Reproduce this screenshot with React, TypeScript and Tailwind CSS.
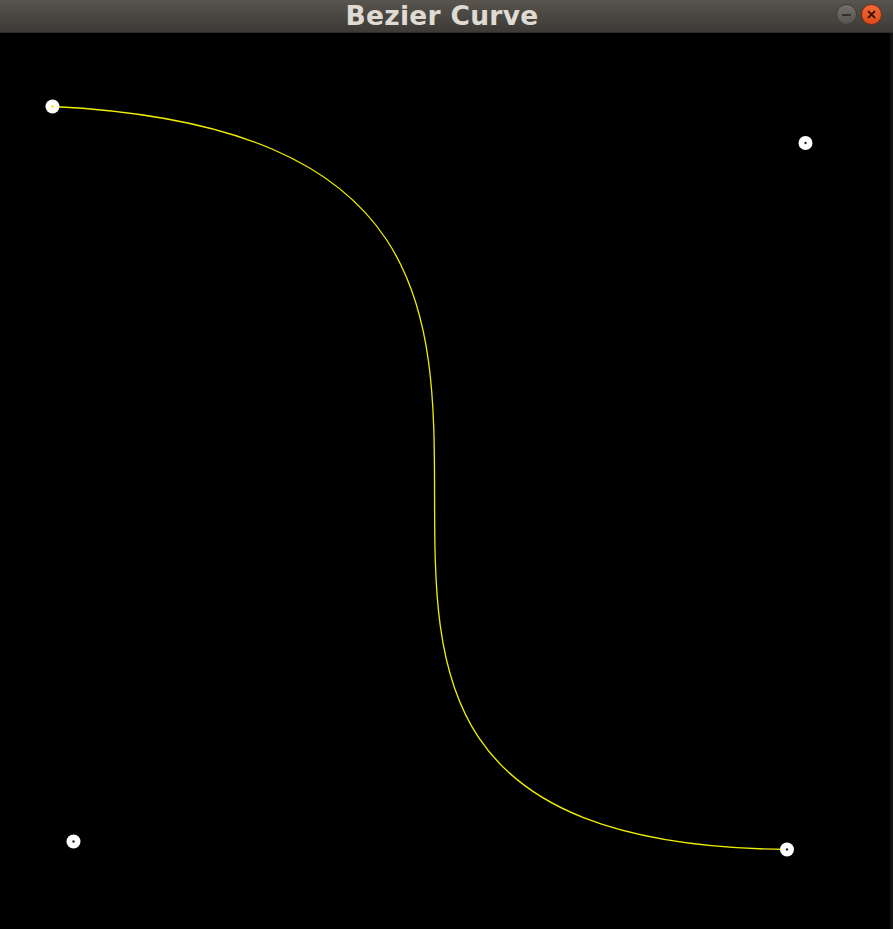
export default function App() {
  // control points in canvas coordinates (canvas starts below the 33px title bar)
  const p0 = { x: 52.5, y: 73.5 }
  const p1 = { x: 805.5, y: 110 }
  const p2 = { x: 73.5, y: 808.5 }
  const p3 = { x: 787, y: 816.5 }

  return (
    <div className="w-[893px] h-[929px] flex flex-col bg-black overflow-hidden">
      <div className="h-[33px] shrink-0 relative flex items-center justify-center pr-[9px] bg-gradient-to-b from-[#58544e] to-[#3d3b37] border-b border-[#2b2a27]">
        <span
          className="text-[26.5px] font-bold leading-none text-[#dfdbd2] tracking-[0.3px]"
          style={{ fontFamily: '"DejaVu Sans", sans-serif' }}
        >
          Bezier Curve
        </span>
        <div className="absolute right-[11px] top-[4px] flex items-center gap-[4px]">
          <div className="w-[21px] h-[21px] rounded-full bg-gradient-to-b from-[#74716b] to-[#55534f] border border-[#3a3935] flex items-center justify-center">
            <div className="w-[9px] h-[2px] bg-[#2f2e2b] rounded" />
          </div>
          <div className="w-[21px] h-[21px] rounded-full bg-gradient-to-b from-[#f36a37] to-[#de4b17] border border-[#7a2a0e] flex items-center justify-center">
            <svg width="9" height="9" viewBox="0 0 9 9">
              <path d="M1.5 1.5 L7.5 7.5 M7.5 1.5 L1.5 7.5" stroke="#3a1406" strokeWidth="1.8" strokeLinecap="round" />
            </svg>
          </div>
        </div>
      </div>
      <div className="flex-1 flex">
        <svg className="flex-1 block" width="890" height="896" viewBox="0 0 890 896">
          <path
            d={`M${p0.x} ${p0.y} C${p1.x} ${p1.y} ${p2.x} ${p2.y} ${p3.x} ${p3.y}`}
            fill="none"
            stroke="#f0f000"
            strokeWidth="1.3"
          />
          <circle cx={p0.x} cy={p0.y} r="7" fill="#ffffff" />
          <circle cx={p0.x} cy={p0.y} r="1.2" fill="#e8e800" />
          {[p1, p2, p3].map((p, i) => (
            <g key={i}>
              <circle cx={p.x} cy={p.y} r="7" fill="#ffffff" />
              <circle cx={p.x} cy={p.y} r="1.2" fill="#222222" />
            </g>
          ))}
        </svg>
        <div className="w-[3px] bg-[#141414]" />
      </div>
    </div>
  )
}
